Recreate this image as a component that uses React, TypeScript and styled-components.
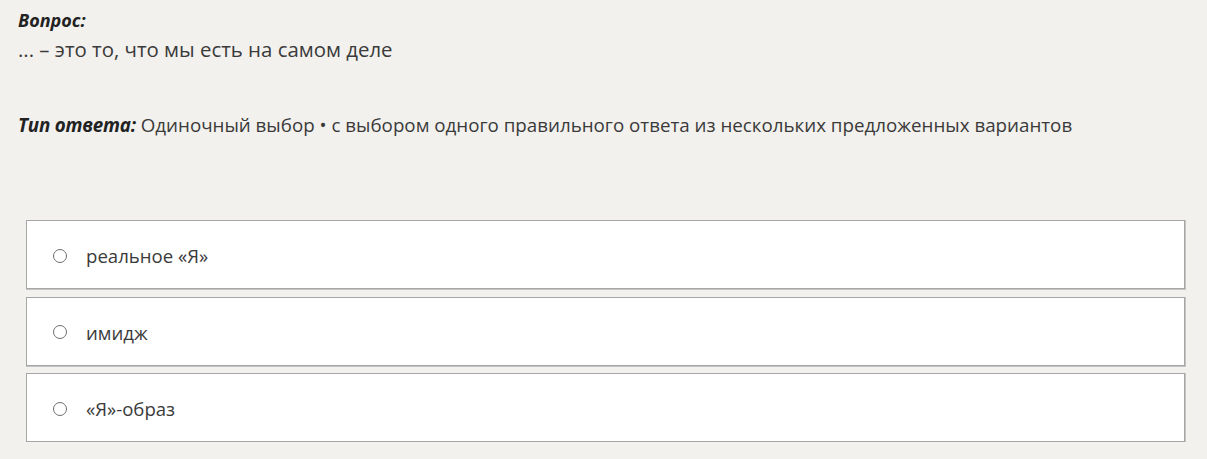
import React from "react";
import styled, { createGlobalStyle } from "styled-components";

const Global = createGlobalStyle`
  html, body { margin: 0; padding: 0; background: #f2f1ee; }
  body { font-family: "Open Sans", "Noto Sans", sans-serif; color: #333; }
`;

const Page = styled.div`
  padding: 6px 18px 0 18px;
  width: 1207px;
  box-sizing: border-box;
`;

const Label = styled.div`
  font-weight: 700;
  font-style: italic;
  font-size: 18px;
  line-height: 28px;
  color: #222;
`;

const Question = styled.div`
  font-size: 20.4px;
  line-height: 30px;
  color: #3a3a3a;
`;

const TypeLine = styled.div`
  margin-top: 46px;
  font-size: 18.75px;
  line-height: 30px;
  color: #3a3a3a;
`;

const TypeLabel = styled.span`
  font-weight: 700;
  font-style: italic;
  color: #222;
  letter-spacing: -0.2px;
`;

const Options = styled.div`
  margin-top: 80px;
  margin-left: 8px;
  width: 1159px;
  display: flex;
  flex-direction: column;
  gap: 7.5px;
`;

const Option = styled.label`
  display: flex;
  align-items: center;
  gap: 19px;
  height: 69px;
  box-sizing: border-box;
  padding: 2px 0 0 26px;
  background: #fff;
  border: 1px solid #a6a6a6;
  box-shadow: 0.5px 0.5px 0 0.5px #c4c4c4;
  font-size: 18.6px;
  color: #3a3a3a;
  cursor: pointer;
`;

const Radio = styled.span`
  width: 14px;
  height: 14px;
  box-sizing: border-box;
  border: 1.6px solid #6e6e6e;
  border-radius: 50%;
  flex: none;
`;

const options = ["реальное «Я»", "имидж", "«Я»-образ"];

export default function App() {
  return (
    <>
      <Global />
      <Page>
        <Label>Вопрос:</Label>
        <Question>... – это то, что мы есть на самом деле</Question>
        <TypeLine>
          <TypeLabel>Тип ответа:</TypeLabel> Одиночный выбор • с выбором одного правильного ответа из нескольких предложенных вариантов
        </TypeLine>
        <Options>
          {options.map((o) => (
            <Option key={o}>
              <Radio />
              <span>{o}</span>
            </Option>
          ))}
        </Options>
      </Page>
    </>
  );
}
